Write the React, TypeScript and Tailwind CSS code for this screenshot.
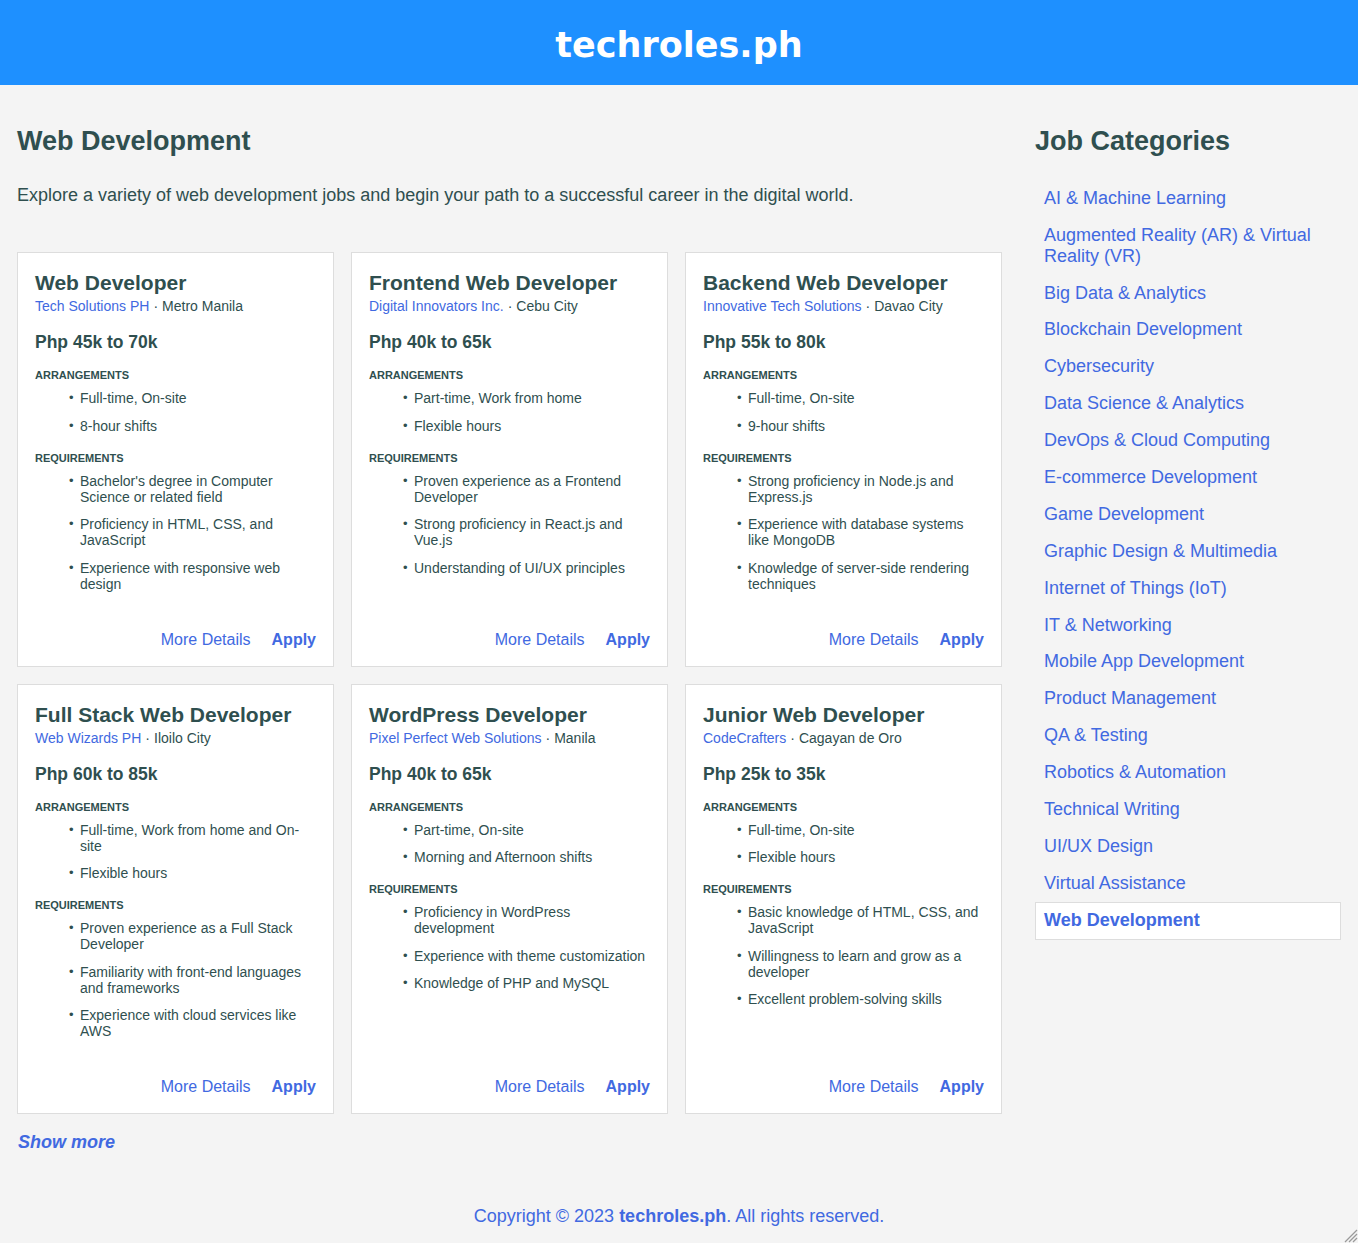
import React, { JSX } from 'react';

type Job = {
  title: string;
  company: string;
  location: string;
  salary: string;
  arrangements: string[];
  requirements: string[];
};

const jobs: Job[] = [
  {
    title: 'Web Developer',
    company: 'Tech Solutions PH',
    location: 'Metro Manila',
    salary: 'Php 45k to 70k',
    arrangements: ['Full-time, On-site', '8-hour shifts'],
    requirements: [
      "Bachelor's degree in Computer Science or related field",
      'Proficiency in HTML, CSS, and JavaScript',
      'Experience with responsive web design',
    ],
  },
  {
    title: 'Frontend Web Developer',
    company: 'Digital Innovators Inc.',
    location: 'Cebu City',
    salary: 'Php 40k to 65k',
    arrangements: ['Part-time, Work from home', 'Flexible hours'],
    requirements: [
      'Proven experience as a Frontend Developer',
      'Strong proficiency in React.js and Vue.js',
      'Understanding of UI/UX principles',
    ],
  },
  {
    title: 'Backend Web Developer',
    company: 'Innovative Tech Solutions',
    location: 'Davao City',
    salary: 'Php 55k to 80k',
    arrangements: ['Full-time, On-site', '9-hour shifts'],
    requirements: [
      'Strong proficiency in Node.js and Express.js',
      'Experience with database systems like MongoDB',
      'Knowledge of server-side rendering techniques',
    ],
  },
  {
    title: 'Full Stack Web Developer',
    company: 'Web Wizards PH',
    location: 'Iloilo City',
    salary: 'Php 60k to 85k',
    arrangements: ['Full-time, Work from home and On-site', 'Flexible hours'],
    requirements: [
      'Proven experience as a Full Stack Developer',
      'Familiarity with front-end languages and frameworks',
      'Experience with cloud services like AWS',
    ],
  },
  {
    title: 'WordPress Developer',
    company: 'Pixel Perfect Web Solutions',
    location: 'Manila',
    salary: 'Php 40k to 65k',
    arrangements: ['Part-time, On-site', 'Morning and Afternoon shifts'],
    requirements: [
      'Proficiency in WordPress development',
      'Experience with theme customization',
      'Knowledge of PHP and MySQL',
    ],
  },
  {
    title: 'Junior Web Developer',
    company: 'CodeCrafters',
    location: 'Cagayan de Oro',
    salary: 'Php 25k to 35k',
    arrangements: ['Full-time, On-site', 'Flexible hours'],
    requirements: [
      'Basic knowledge of HTML, CSS, and JavaScript',
      'Willingness to learn and grow as a developer',
      'Excellent problem-solving skills',
    ],
  },
];

const categories = [
  'AI & Machine Learning',
  'Augmented Reality (AR) & Virtual Reality (VR)',
  'Big Data & Analytics',
  'Blockchain Development',
  'Cybersecurity',
  'Data Science & Analytics',
  'DevOps & Cloud Computing',
  'E-commerce Development',
  'Game Development',
  'Graphic Design & Multimedia',
  'Internet of Things (IoT)',
  'IT & Networking',
  'Mobile App Development',
  'Product Management',
  'QA & Testing',
  'Robotics & Automation',
  'Technical Writing',
  'UI/UX Design',
  'Virtual Assistance',
  'Web Development',
];

const ACTIVE = 'Web Development';

const BulletList = ({ items }: { items: string[] }): JSX.Element => (
  <ul className="mt-[8px] flex flex-col gap-[11.5px] pl-[45px] text-[14px] leading-[16px]">
    {items.map((item) => (
      <li
        key={item}
        className="relative before:absolute before:top-0 before:-left-[11px] before:text-[13px] before:content-['•']"
      >
        {item}
      </li>
    ))}
  </ul>
);

const JobCard = ({ job }: { job: Job }): JSX.Element => (
  <div className="flex flex-col border border-[#dddddd] bg-white px-[17px] pt-[18px] pb-[17px]">
    <h3 className="text-[21px] leading-[24px] font-bold">{job.title}</h3>
    <p className="mt-[3px] text-[14px] leading-[16px]">
      <a href="#" className="text-[#4169e1]">
        {job.company}
      </a>
      <span className="px-[4px]">·</span>
      {job.location}
    </p>
    <p className="mt-[18px] text-[17.5px] leading-[20px] font-bold">{job.salary}</p>
    <h4 className="mt-[16px] text-[11px] leading-[14px] font-bold">ARRANGEMENTS</h4>
    <BulletList items={job.arrangements} />
    <h4 className="mt-[17px] text-[11px] leading-[14px] font-bold">REQUIREMENTS</h4>
    <BulletList items={job.requirements} />
    <div className="mt-auto flex justify-end gap-[21px] pt-[39px] text-[16px] leading-[18px] text-[#4169e1]">
      <a href="#">More Details</a>
      <a href="#" className="font-bold">
        Apply
      </a>
    </div>
  </div>
);

const App = (): JSX.Element => {
  return (
    <div className="min-h-[1243px] bg-[#f4f4f4] font-['Liberation_Sans',Arial,sans-serif] text-[#2f4f4f]">
      <header className="flex h-[85px] items-center justify-center bg-[#1e90ff] pt-[4px]">
        <h1 className="font-['DejaVu_Sans',Verdana,sans-serif] text-[35px] leading-[40px] font-bold text-white">
          techroles.ph
        </h1>
      </header>

      <main className="flex gap-[33px] px-[17px]">
        <section className="w-[985px] shrink-0">
          <h2 className="mt-[41px] text-[27px] leading-[31px] font-bold">Web Development</h2>
          <p className="mt-[28px] text-[18px] leading-[21px]">
            Explore a variety of web development jobs and begin your path to a successful career in
            the digital world.
          </p>
          <div className="mt-[46px] grid grid-cols-3 gap-x-[17px] gap-y-[17px]">
            {jobs.map((job) => (
              <JobCard key={job.title} job={job} />
            ))}
          </div>
          <a
            href="#"
            className="mt-[18px] ml-[1px] block text-[18px] leading-[21px] font-bold text-[#4169e1] italic"
          >
            Show more
          </a>
        </section>

        <aside className="w-[306px] shrink-0">
          <h2 className="mt-[41px] text-[27px] leading-[31px] font-bold">Job Categories</h2>
          <ul className="mt-[23px] text-[18px] leading-[20.7px] text-[#4169e1]">
            {categories.map((cat) =>
              cat === ACTIVE ? (
                <li
                  key={cat}
                  className="border border-[#dddddd] bg-white px-[8px] py-[7.6px] font-bold"
                >
                  <a href="#">{cat}</a>
                </li>
              ) : (
                <li key={cat} className="px-[9px] py-[8.1px]">
                  <a href="#">{cat}</a>
                </li>
              ),
            )}
          </ul>
        </aside>
      </main>

      <footer className="mt-[53px] pb-[17px] text-center text-[18px] leading-[21px] text-[#4169e1]">
        Copyright © 2023 <span className="font-bold">techroles.ph</span>. All rights reserved.
      </footer>

      <svg
        className="fixed right-0 bottom-0"
        width="15"
        height="15"
        viewBox="0 0 15 15"
        stroke="#9a9a9a"
        strokeWidth="1.2"
      >
        <line x1="14" y1="2" x2="2" y2="14" />
        <line x1="14" y1="6" x2="6" y2="14" />
        <line x1="14" y1="10" x2="10" y2="14" />
      </svg>
    </div>
  );
};

export default App;
